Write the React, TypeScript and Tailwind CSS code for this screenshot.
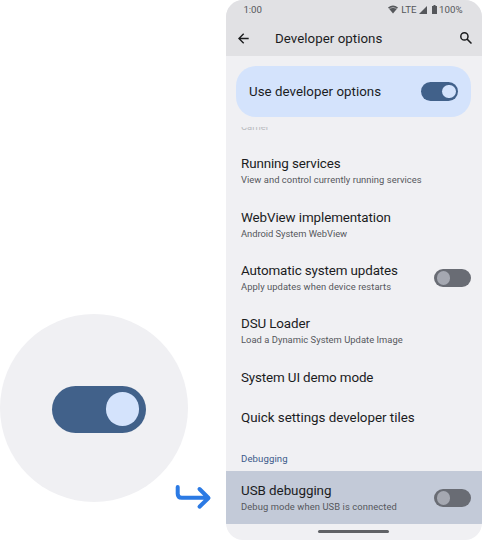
import React from "react";

type ToggleProps = { on?: boolean };

function Toggle({ on = false }: ToggleProps) {
  return (
    <span
      className={
        on
          ? "flex h-[18.5px] w-[37px] shrink-0 items-center justify-end rounded-full bg-[#41618a] px-[2.5px]"
          : "flex h-[18.5px] w-[37px] shrink-0 items-center justify-start rounded-full bg-[#696c74] px-[2.5px]"
      }
    >
      <span
        className={
          on
            ? "size-[13.5px] rounded-full bg-[#d4e3fc]"
            : "size-[13.5px] rounded-full bg-[#a5a8b1]"
        }
      />
    </span>
  );
}

type RowProps = {
  title: string;
  titleClass: string;
  sub?: string;
  subClass?: string;
  toggle?: boolean;
  className: string;
};

function Row({ title, titleClass, sub, subClass = "", toggle, className }: RowProps) {
  return (
    <div className={`flex shrink-0 items-center justify-between pl-[15.5px] pr-[10.5px] ${className}`}>
      <div className="whitespace-nowrap">
        <div className={`text-[13.4px] leading-[17px] text-[#1b1c1e] ${titleClass}`}>{title}</div>
        {sub && <div className={`text-[9.4px] leading-[15px] text-[#55575c] ${subClass}`}>{sub}</div>}
      </div>
      {toggle && <Toggle />}
    </div>
  );
}

export default function App() {
  return (
    <div className="flex h-[540px] w-[482px] overflow-hidden bg-white font-['Roboto',sans-serif]">
      <div className="flex w-[225.5px] shrink-0 flex-col pt-[314px]">
        <div className="flex size-[188px] shrink-0 items-center justify-center rounded-full bg-[#f0f0f3] pl-[9.5px] pt-[2px]">
          <div className="flex h-[47px] w-[93.5px] items-center justify-end rounded-full bg-[#41618a] pr-[6.5px]">
            <div className="size-[33.5px] rounded-full bg-[#d4e3fc]" />
          </div>
        </div>
        <svg
          className="-mt-[19px] ml-[173px] h-[30px] w-[40px]"
          viewBox="173 483 40 30"
          fill="none"
          stroke="#2b7ae4"
          strokeWidth="4"
          strokeLinecap="round"
          strokeLinejoin="round"
        >
          <path d="M177.7 487v6.8q0 4 4 4H208M199.5 489l9 9-9 8.7" />
        </svg>
      </div>

      <div className="flex h-[540px] w-[256px] shrink-0 flex-col overflow-hidden rounded-[17px] bg-[#f0f0f3]">
        <header className="h-14 shrink-0 bg-[#e1e1e4]">
          <div className="flex h-[20px] items-center justify-between pl-[18px] pr-[19px] text-[9.7px] text-[#55575b]">
            <span className="tracking-[-0.1px]">1:00</span>
            <div className="flex items-center">
              <svg className="mr-[3.5px] h-[9px] w-[10px]" viewBox="0 0 10 9">
                <path d="M0 2.5Q5-1.5 10 2.5L5 8.6Z" fill="#55575b" />
                <path d="M1.3 3.6Q5 1 8.7 3.6" fill="none" stroke="#b4b5b8" strokeWidth=".8" />
              </svg>
              <span>LTE</span>
              <svg className="ml-[2.5px] h-[8px] w-[8px]" viewBox="0 0 8 8">
                <path d="M8 0v8H0Z" fill="#55575b" />
              </svg>
              <svg className="ml-[4.5px] mr-[2.5px] h-[9px] w-[5px]" viewBox="0 0 5 9">
                <path d="M1.5 0h2v1H5v8H0V1h1.5Z" fill="#55575b" />
              </svg>
              <span>100%</span>
            </div>
          </div>
          <div className="flex h-[36px] items-center pl-[12.5px] pr-[10px] text-[#1b1c1e]">
            <svg className="h-[11px] w-[11px] shrink-0" viewBox="0 0 11 11" fill="none" stroke="#1b1c1e" strokeWidth="1.4">
              <path d="M10.7 5.5H1M5.7.7.9 5.5l4.8 4.8" />
            </svg>
            <h1 className="ml-[26px] mt-px whitespace-nowrap text-[13.3px] leading-[18px] tracking-[0.04px]">Developer options</h1>
            <svg className="ml-auto h-[12px] w-[12px] shrink-0" viewBox="0 0 12 12" fill="none" stroke="#1b1c1e" strokeWidth="1.5">
              <circle cx="4.4" cy="4.4" r="3.6" />
              <path d="m7.1 7.1 4.4 4.4" />
            </svg>
          </div>
        </header>

        <section className="ml-[10.7px] mr-[10.5px] mt-[10.4px] flex h-[50.4px] shrink-0 items-center justify-between rounded-[20px] bg-[#d4e3fc] pl-[12.8px] pr-[12.8px]">
          <span className="whitespace-nowrap text-[13.3px] tracking-[0.04px] text-[#1b1c1e]">Use developer options</span>
          <Toggle on />
        </section>

        <div className="mt-[9.8px] flex h-[4px] shrink-0 items-end overflow-hidden pl-[15.5px] text-[9.4px] leading-[8px] text-[#b9bbc0]">
          <span className="block">Carrier</span>
        </div>
        <main className="flex flex-col pt-[14px]">
          <Row className="h-[53.3px]" title="Running services" titleClass="tracking-[-0.12px]" sub="View and control currently running services" subClass="tracking-[0.04px]" />
          <Row className="h-[53.3px]" title="WebView implementation" titleClass="tracking-[-0.1px]" sub="Android System WebView" subClass="tracking-[-0.04px]" />
          <Row className="h-[53.3px]" title="Automatic system updates" titleClass="tracking-[-0.12px]" sub="Apply updates when device restarts" subClass="tracking-[0.06px]" toggle />
          <Row className="h-[53.3px]" title="DSU Loader" titleClass="tracking-[-0.12px]" sub="Load a Dynamic System Update Image" subClass="tracking-[0.03px]" />
          <Row className="h-[39.8px]" title="System UI demo mode" titleClass="tracking-[-0.13px]" />
          <Row className="h-[39.8px]" title="Quick settings developer tiles" titleClass="tracking-[-0.03px]" />
          <div className="flex h-[33.2px] items-center pl-[15.5px] pt-[10px] text-[9.6px] tracking-[0.1px] text-[#3b5a8a]">Debugging</div>
          <Row className="h-[53.5px] bg-[#c3cad8] pt-[1px]" title="USB debugging" titleClass="tracking-[-0.05px]" sub="Debug mode when USB is connected" subClass="tracking-[0.09px]" toggle />
        </main>
        <div className="mx-auto mt-[6.3px] h-[2.6px] w-[71px] shrink-0 rounded-full bg-[#606266]" />
      </div>
    </div>
  );
}
